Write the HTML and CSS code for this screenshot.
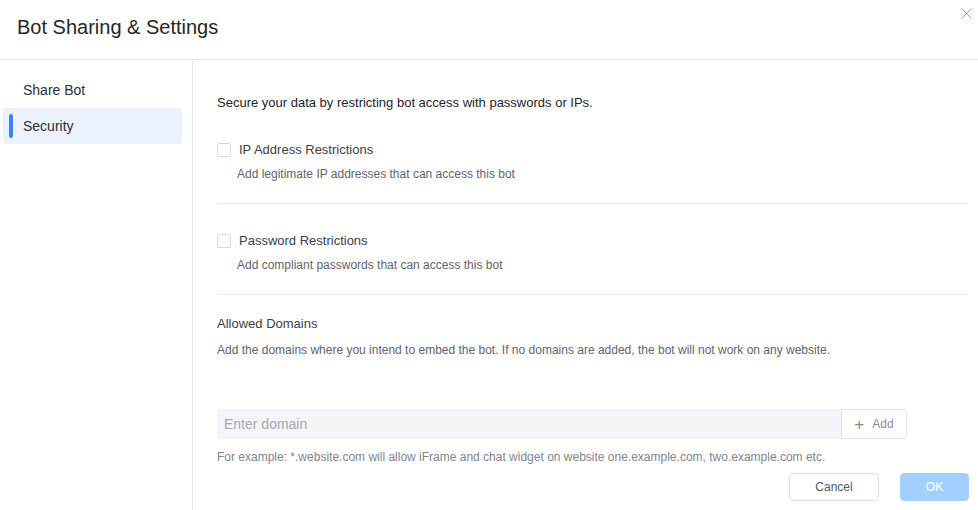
FILE: index.html
```html
<!DOCTYPE html>
<html lang="en">
<head>
  <meta charset="UTF-8" />
  <meta name="viewport" content="width=device-width, initial-scale=1.0" />
  <title>Bot Sharing &amp; Settings</title>
  <link rel="stylesheet" href="styles.css">
</head>
<body>
  <div class="dialog">
    <!-- Cabecera -->
    <div class="dialog-header">
      <h2 class="dialog-title">Bot Sharing &amp; Settings</h2>
      <button class="close-btn" aria-label="Close">
        <svg width="11" height="11" viewBox="0 0 11 11"><path d="M0.5 0.5 L10.5 10.5 M10.5 0.5 L0.5 10.5" stroke="#9a9a9a" stroke-width="1" fill="none"/></svg>
      </button>
    </div>

    <div class="dialog-body">
      <!-- Menú lateral -->
      <aside class="side-menu">
        <a href="#" class="menu-item">Share Bot</a>
        <a href="#" class="menu-item active">Security</a>
      </aside>

      <!-- Contenido -->
      <section class="content">
        <p class="intro">Secure your data by restricting bot access with passwords or IPs.</p>

        <div class="option">
          <label class="check-row"><span class="checkbox"></span>IP Address Restrictions</label>
          <p class="option-desc">Add legitimate IP addresses that can access this bot</p>
        </div>

        <div class="option">
          <label class="check-row"><span class="checkbox"></span>Password Restrictions</label>
          <p class="option-desc">Add compliant passwords that can access this bot</p>
        </div>

        <div class="domains">
          <h3 class="domains-title">Allowed Domains</h3>
          <p class="option-desc flat">Add the domains where you intend to embed the bot. If no domains are added, the bot will not work on any website.</p>
          <div class="domain-input">
            <input type="text" placeholder="Enter domain" />
            <button class="add-btn"><span class="plus">+</span>Add</button>
          </div>
          <p class="hint">For example: *.website.com will allow iFrame and chat widget on website one.example.com, two.example.com etc.</p>
        </div>

        <div class="dialog-footer">
          <button class="btn btn-cancel">Cancel</button>
          <button class="btn btn-ok">OK</button>
        </div>
      </section>
    </div>
  </div>
</body>
</html>
```

FILE: styles.css
```css
html, body {
  margin: 0;
  padding: 0;
}
body {
  font-family: 'Liberation Sans', Arial, sans-serif;
  background: #fff;
  color: #1f2329;
  width: 978px;
  height: 510px;
  overflow: hidden;
}
.dialog {
  display: flex;
  flex-direction: column;
  height: 510px;
}
/* Cabecera */
.dialog-header {
  position: relative;
  height: 59px;
  border-bottom: 1px solid #e4e4e4;
  display: flex;
  align-items: center;
  padding-left: 17px;
}
.dialog-title {
  margin: 0;
  font-size: 20px;
  font-weight: normal;
  color: #262626;
  padding-bottom: 5px;
}
.close-btn {
  position: absolute;
  top: 8px;
  right: 6px;
  border: 0;
  background: none;
  padding: 0;
  width: 11px;
  height: 11px;
  cursor: pointer;
}
.close-btn svg { display: block; }

.dialog-body {
  flex: 1;
  display: flex;
}
/* Menú lateral */
.side-menu {
  width: 193px;
  box-sizing: border-box;
  border-right: 1px solid #e6e6e6;
  padding: 12px 10px 0 3px;
  display: flex;
  flex-direction: column;
}
.menu-item {
  position: relative;
  display: block;
  height: 36px;
  line-height: 36px;
  padding-left: 20px;
  font-size: 14px;
  color: #2b2f36;
  text-decoration: none;
  border-radius: 4px;
}
.menu-item.active {
  background: #ebf1fd;
}
.menu-item.active::before {
  content: '';
  position: absolute;
  left: 6px;
  top: 6px;
  width: 4px;
  height: 24px;
  border-radius: 2px;
  background: #3c82f6;
}
/* Contenido */
.content {
  flex: 1;
  padding: 33px 10px 0 24px;
  display: flex;
  flex-direction: column;
}
.intro {
  margin: 0;
  font-size: 13px;
  line-height: 20px;
  color: #1f2329;
}
.option {
  padding: 27px 0 20px;
  border-bottom: 1px solid #e8e8e8;
}
.check-row {
  display: flex;
  align-items: center;
  font-size: 13px;
  line-height: 20px;
  color: #3b3f47;
}
.checkbox {
  width: 12px;
  height: 12px;
  border: 1px solid #d6d9de;
  border-radius: 2px;
  margin-right: 8px;
  background: #fff;
}
.option-desc {
  margin: 5px 0 0 20px;
  font-size: 12px;
  line-height: 18px;
  color: #5f646c;
}
.option-desc.flat { margin: 7px 0 0; }
.domains {
  padding-top: 19px;
}
.domains-title {
  margin: 0;
  font-size: 13px;
  font-weight: normal;
  line-height: 20px;
  color: #3b3f47;
}
.domain-input {
  display: flex;
  width: 690px;
  height: 30px;
  margin-top: 50px;
}
.domain-input input {
  flex: 1;
  border: 0;
  outline: none;
  background: #f4f5f9;
  border-radius: 4px 0 0 4px;
  padding: 0 7px;
  font-family: inherit;
  font-size: 14px;
  color: #333;
}
.domain-input input::placeholder { color: #a4a8b0; }
.add-btn {
  width: 66px;
  box-sizing: border-box;
  border: 1px solid #dfe1e5;
  border-radius: 0 3px 3px 0;
  background: #fff;
  font-family: inherit;
  font-size: 12px;
  color: #8a9099;
  display: flex;
  align-items: center;
  justify-content: center;
  cursor: pointer;
}
.add-btn .plus {
  font-size: 17px;
  font-weight: 300;
  margin-right: 8px;
  color: #8a8f97;
  line-height: 1;
}
.hint {
  margin: 9px 0 0;
  font-size: 12px;
  line-height: 18px;
  color: #80858d;
}
/* Pie */
.dialog-footer {
  display: flex;
  justify-content: flex-end;
  gap: 21px;
  margin-top: 7px;
  margin-right: -1px;
}
.btn {
  height: 28px;
  border-radius: 4px;
  font-family: inherit;
  font-size: 12px;
  cursor: pointer;
}
.btn-cancel {
  width: 90px;
  border: 1px solid #dcdfe6;
  background: #fff;
  color: #555a62;
}
.btn-ok {
  width: 69px;
  border: 1px solid #a3cfff;
  background: #a3cfff;
  color: #fff;
}
```
